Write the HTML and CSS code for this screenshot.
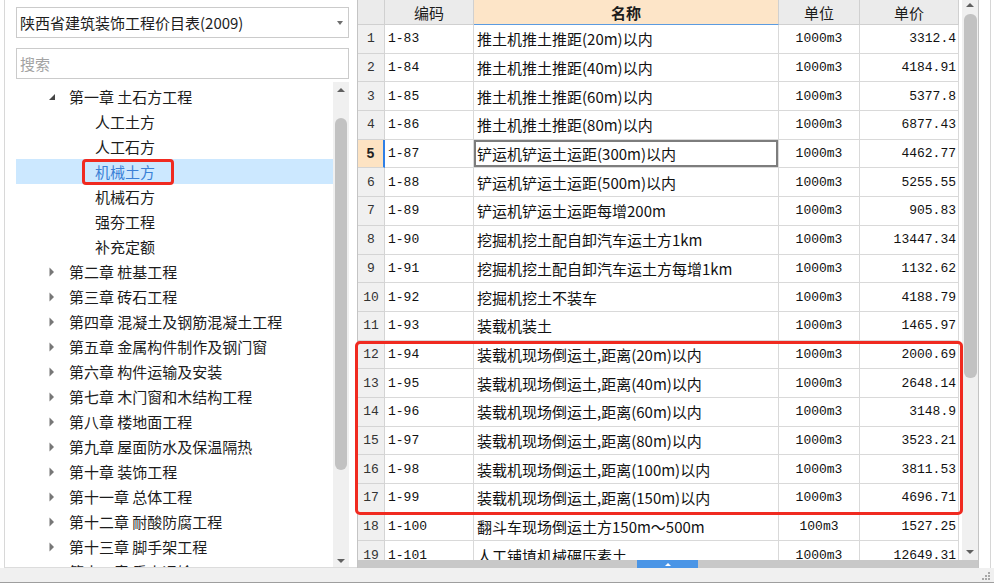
FILE: index.html
```html
<!DOCTYPE html>
<html lang="zh-CN">
<head>
<meta charset="utf-8">
<title>定额库</title>
<link rel="stylesheet" href="styles.css">
</head>
<body>
<div class="app">
  <div class="main">
    <aside class="side">
      <div class="combo">
        <span>陕西省建筑装饰工程价目表(2009)</span>
        <span class="tri-down"></span>
      </div>
      <div class="search">搜索</div>
      <div class="tree">
        <ul class="tree-list">
          <li class="node"><svg width="8" height="8" viewBox="0 0 8 8"><path d="M7 1V7H1Z" fill="#454545"/></svg>第一章 土石方工程</li>
          <li class="leaf">人工土方</li>
          <li class="leaf">人工石方</li>
          <li class="leaf selected">机械土方<span class="mark-tree"></span></li>
          <li class="leaf">机械石方</li>
          <li class="leaf">强夯工程</li>
          <li class="leaf">补充定额</li>
          <li class="node"><svg width="8" height="10" viewBox="0 0 8 10"><path d="M1.5 0.5L6 5L1.5 9.5Z" fill="#777"/></svg>第二章 桩基工程</li>
          <li class="node"><svg width="8" height="10" viewBox="0 0 8 10"><path d="M1.5 0.5L6 5L1.5 9.5Z" fill="#777"/></svg>第三章 砖石工程</li>
          <li class="node"><svg width="8" height="10" viewBox="0 0 8 10"><path d="M1.5 0.5L6 5L1.5 9.5Z" fill="#777"/></svg>第四章 混凝土及钢筋混凝土工程</li>
          <li class="node"><svg width="8" height="10" viewBox="0 0 8 10"><path d="M1.5 0.5L6 5L1.5 9.5Z" fill="#777"/></svg>第五章 金属构件制作及钢门窗</li>
          <li class="node"><svg width="8" height="10" viewBox="0 0 8 10"><path d="M1.5 0.5L6 5L1.5 9.5Z" fill="#777"/></svg>第六章 构件运输及安装</li>
          <li class="node"><svg width="8" height="10" viewBox="0 0 8 10"><path d="M1.5 0.5L6 5L1.5 9.5Z" fill="#777"/></svg>第七章 木门窗和木结构工程</li>
          <li class="node"><svg width="8" height="10" viewBox="0 0 8 10"><path d="M1.5 0.5L6 5L1.5 9.5Z" fill="#777"/></svg>第八章 楼地面工程</li>
          <li class="node"><svg width="8" height="10" viewBox="0 0 8 10"><path d="M1.5 0.5L6 5L1.5 9.5Z" fill="#777"/></svg>第九章 屋面防水及保温隔热</li>
          <li class="node"><svg width="8" height="10" viewBox="0 0 8 10"><path d="M1.5 0.5L6 5L1.5 9.5Z" fill="#777"/></svg>第十章 装饰工程</li>
          <li class="node"><svg width="8" height="10" viewBox="0 0 8 10"><path d="M1.5 0.5L6 5L1.5 9.5Z" fill="#777"/></svg>第十一章 总体工程</li>
          <li class="node"><svg width="8" height="10" viewBox="0 0 8 10"><path d="M1.5 0.5L6 5L1.5 9.5Z" fill="#777"/></svg>第十二章 耐酸防腐工程</li>
          <li class="node"><svg width="8" height="10" viewBox="0 0 8 10"><path d="M1.5 0.5L6 5L1.5 9.5Z" fill="#777"/></svg>第十三章 脚手架工程</li>
          <li class="node"><svg width="8" height="10" viewBox="0 0 8 10"><path d="M1.5 0.5L6 5L1.5 9.5Z" fill="#777"/></svg>第十四章 垂直运输</li>
        </ul>
        <div class="sb tree-sb">
          <span class="tri-up"></span>
          <span class="thumb tree-thumb"></span>
          <span class="tri-dn"></span>
        </div>
      </div>
    </aside>

    <section class="grid">
      <div class="grid-body">
        <div class="table">
          <div class="row head">
            <div class="cell"></div>
            <div class="cell">编码</div>
            <div class="cell active">名称</div>
            <div class="cell">单位</div>
            <div class="cell">单价</div>
          </div>
          <div class="row"><div class="cell num">1</div><div class="cell code">1-83</div><div class="cell name">推土机推土推距(20m)以内</div><div class="cell unit">1000m3</div><div class="cell price">3312.4</div></div>
          <div class="row"><div class="cell num">2</div><div class="cell code">1-84</div><div class="cell name">推土机推土推距(40m)以内</div><div class="cell unit">1000m3</div><div class="cell price">4184.91</div></div>
          <div class="row"><div class="cell num">3</div><div class="cell code">1-85</div><div class="cell name">推土机推土推距(60m)以内</div><div class="cell unit">1000m3</div><div class="cell price">5377.8</div></div>
          <div class="row"><div class="cell num">4</div><div class="cell code">1-86</div><div class="cell name">推土机推土推距(80m)以内</div><div class="cell unit">1000m3</div><div class="cell price">6877.43</div></div>
          <div class="row current"><div class="cell num">5</div><div class="cell code">1-87</div><div class="cell name">铲运机铲运土运距(300m)以内</div><div class="cell unit">1000m3</div><div class="cell price">4462.77</div></div>
          <div class="row"><div class="cell num">6</div><div class="cell code">1-88</div><div class="cell name">铲运机铲运土运距(500m)以内</div><div class="cell unit">1000m3</div><div class="cell price">5255.55</div></div>
          <div class="row"><div class="cell num">7</div><div class="cell code">1-89</div><div class="cell name">铲运机铲运土运距每增200m</div><div class="cell unit">1000m3</div><div class="cell price">905.83</div></div>
          <div class="row"><div class="cell num">8</div><div class="cell code">1-90</div><div class="cell name">挖掘机挖土配自卸汽车运土方1km</div><div class="cell unit">1000m3</div><div class="cell price">13447.34</div></div>
          <div class="row"><div class="cell num">9</div><div class="cell code">1-91</div><div class="cell name">挖掘机挖土配自卸汽车运土方每增1km</div><div class="cell unit">1000m3</div><div class="cell price">1132.62</div></div>
          <div class="row"><div class="cell num">10</div><div class="cell code">1-92</div><div class="cell name">挖掘机挖土不装车</div><div class="cell unit">1000m3</div><div class="cell price">4188.79</div></div>
          <div class="row"><div class="cell num">11</div><div class="cell code">1-93</div><div class="cell name">装载机装土</div><div class="cell unit">1000m3</div><div class="cell price">1465.97</div></div>
          <div class="row"><div class="cell num">12</div><div class="cell code">1-94</div><div class="cell name">装载机现场倒运土,距离(20m)以内</div><div class="cell unit">1000m3</div><div class="cell price">2000.69</div></div>
          <div class="row"><div class="cell num">13</div><div class="cell code">1-95</div><div class="cell name">装载机现场倒运土,距离(40m)以内</div><div class="cell unit">1000m3</div><div class="cell price">2648.14</div></div>
          <div class="row"><div class="cell num">14</div><div class="cell code">1-96</div><div class="cell name">装载机现场倒运土,距离(60m)以内</div><div class="cell unit">1000m3</div><div class="cell price">3148.9</div></div>
          <div class="row"><div class="cell num">15</div><div class="cell code">1-97</div><div class="cell name">装载机现场倒运土,距离(80m)以内</div><div class="cell unit">1000m3</div><div class="cell price">3523.21</div></div>
          <div class="row"><div class="cell num">16</div><div class="cell code">1-98</div><div class="cell name">装载机现场倒运土,距离(100m)以内</div><div class="cell unit">1000m3</div><div class="cell price">3811.53</div></div>
          <div class="row"><div class="cell num">17</div><div class="cell code">1-99</div><div class="cell name">装载机现场倒运土,距离(150m)以内</div><div class="cell unit">1000m3</div><div class="cell price">4696.71</div></div>
          <div class="row"><div class="cell num">18</div><div class="cell code">1-100</div><div class="cell name">翻斗车现场倒运土方150m～500m</div><div class="cell unit">100m3</div><div class="cell price">1527.25</div></div>
          <div class="row"><div class="cell num">19</div><div class="cell code">1-101</div><div class="cell name">人工铺填机械碾压素土</div><div class="cell unit">1000m3</div><div class="cell price">12649.31</div></div>
        </div>
        <div class="sb grid-sb">
          <span class="tri-up"></span>
          <span class="thumb grid-thumb"></span>
          <span class="tri-dn"></span>
        </div>
      </div>
      <div class="hbar"><span class="hthumb"><span class="tri-up white"></span></span></div>
      <div class="mark-rows"></div>
    </section>

    <div class="edge"><div class="edge-line"></div></div>
  </div>
  <div class="status">
    <svg class="grip" width="9" height="9" viewBox="0 0 9 9">
      <rect x="7" y="1" width="2" height="2" fill="#a8a8a8"/>
      <rect x="4" y="4" width="2" height="2" fill="#a8a8a8"/>
      <rect x="7" y="4" width="2" height="2" fill="#a8a8a8"/>
      <rect x="1" y="7" width="2" height="2" fill="#a8a8a8"/>
      <rect x="4" y="7" width="2" height="2" fill="#a8a8a8"/>
      <rect x="7" y="7" width="2" height="2" fill="#a8a8a8"/>
    </svg>
  </div>
</div>
</body>
</html>
```

FILE: styles.css
```css
* { box-sizing: border-box; }

body {
  margin: 0;
  background: #ffffff;
  font-family: "Noto Sans CJK SC", "Noto Sans", sans-serif;
  font-size: 15px;
  color: #1c1c1c;
}

.app {
  width: 994px;
  height: 586px;
  overflow: hidden;
}

.main {
  display: flex;
  height: 568px;
}

/* ---------- left side ---------- */
.side {
  width: 353px;
  margin-left: 4px;
  border-left: 1px solid #d8d8d8;
  border-bottom: 1px solid #dcdcdc;
  padding: 7px 8px 0 11px;
  display: flex;
  flex-direction: column;
  background: #fff;
}

.combo {
  height: 31px;
  border: 1px solid #cbcbcb;
  display: flex;
  align-items: center;
  justify-content: space-between;
  padding: 0 5px 0 3px;
  color: #1e1e1e;
  white-space: nowrap;
}

.tri-down {
  width: 0;
  height: 0;
  border-left: 3.5px solid transparent;
  border-right: 3.5px solid transparent;
  border-top: 4px solid #6e6e6e;
}

.search {
  height: 31px;
  margin-top: 10px;
  border: 1px solid #cbcbcb;
  padding-left: 3px;
  display: flex;
  align-items: center;
  color: #a3a3a3;
}

.tree {
  margin-top: 3px;
  flex: 1;
  min-height: 0;
  display: flex;
}

.tree-list {
  flex: 1;
  list-style: none;
  margin: 0;
  padding: 2px 0 0;
  overflow: hidden;
}

.tree-list li {
  height: 25px;
  display: flex;
  align-items: center;
  white-space: nowrap;
  position: relative;
  color: #1c1c1c;
}

.tree-list .node { padding-left: 32px; }
.tree-list .node svg { flex: none; margin-right: 13px; }
.tree-list .leaf { padding-left: 79px; }

.tree-list .selected {
  background: #cce8ff;
  color: #3a80d6;
}

.mark-tree {
  position: absolute;
  left: 66px;
  top: 0;
  width: 92px;
  height: 26px;
  border: 3px solid #f02a20;
  border-radius: 4px;
}

/* ---------- scrollbars ---------- */
.sb {
  background: #f0f0f0;
  display: flex;
  flex-direction: column;
  align-items: center;
}

.tri-up {
  width: 0;
  height: 0;
  border-left: 4px solid transparent;
  border-right: 4px solid transparent;
  border-bottom: 4px solid #606060;
}

.tri-up.white { border-bottom-color: #ffffff; border-left-width: 3px; border-right-width: 3px; border-bottom-width: 3px; }

.tri-dn {
  width: 0;
  height: 0;
  border-left: 4px solid transparent;
  border-right: 4px solid transparent;
  border-top: 4px solid #606060;
  margin-top: auto;
}

.thumb {
  background: #c2c2c2;
  border-radius: 6px;
}

.tree-sb { width: 16px; padding-top: 6px; padding-bottom: 4px; }
.tree-thumb { width: 12px; height: 352px; margin-top: 26px; }

/* ---------- grid ---------- */
.grid {
  width: 621px;
  border-left: 1px solid #c4c4c4;
  display: flex;
  flex-direction: column;
  position: relative;
}

.grid-body {
  flex: 1;
  min-height: 0;
  display: flex;
}

.table {
  width: 601px;
  overflow: hidden;
}

.row {
  display: grid;
  grid-template-columns: 27px 89px 305px 81px 99px;
  height: 28.7px;
}

.cell {
  border-right: 1px solid #d9d9d9;
  border-bottom: 1px solid #d9d9d9;
  display: flex;
  align-items: center;
  overflow: hidden;
  white-space: nowrap;
  color: #111;
}

.row.head { height: 25px; }

.head .cell {
  background: #ebebeb;
  justify-content: center;
  border-color: #d0d0d0;
  color: #1c1c1c;
}

.head .cell.active {
  background: #fde5c8;
  font-weight: 700;
  border-bottom-color: #5b9be0;
}

.num {
  background: #f0f0f0;
  justify-content: center;
  font-family: "Liberation Mono", monospace;
  font-size: 13px;
  color: #333;
  border-color: #d4d4d4;
}

.code,
.unit,
.price {
  font-family: "Liberation Mono", monospace;
  font-size: 13px;
}

.code { padding-left: 3px; }
.name { padding-left: 3px; }
.unit { justify-content: center; }
.price { justify-content: flex-end; padding-right: 2px; }

.row.current .num {
  background: #fde3c3;
  font-weight: 700;
  font-size: 14px;
  color: #222;
  border-right: 2px solid #2f7fe6;
}

.row.current .name {
  box-shadow: inset 0 0 0 2px #7d7d7d;
}

.grid-sb {
  width: 19px;
  border-left: 3px solid #fff;
  padding-top: 3px;
  padding-bottom: 6px;
}

.grid-thumb { width: 13px; height: 364px; margin-top: 7px; }

.hbar {
  height: 8px;
  background: #c8c8c8;
  display: flex;
  flex: none;
}

.hthumb {
  margin-left: 279px;
  width: 61px;
  background: #4a95e6;
  display: flex;
  align-items: center;
  justify-content: center;
}

.mark-rows {
  position: absolute;
  left: -3px;
  top: 341px;
  width: 608px;
  height: 174px;
  border: 3px solid #f02a20;
  border-radius: 5px;
}

/* ---------- right edge & status ---------- */
.edge {
  width: 16px;
  border-left: 1px solid #c4c4c4;
  padding-right: 3px;
}

.edge-line {
  height: 100%;
  border-right: 1px solid #d6d6d6;
}

.status {
  height: 15px;
  background: #f0f0f0;
  border-bottom: 1px solid #9e9e9e;
  display: flex;
  justify-content: flex-end;
  align-items: flex-start;
  padding: 3px 4px 0 0;
}

.grip { display: block; }
```
